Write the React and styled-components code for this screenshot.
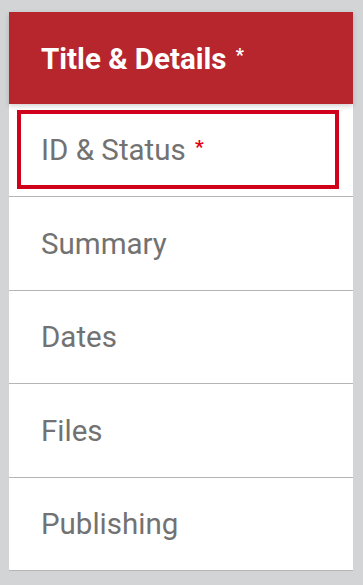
import React from "react";
import styled, { createGlobalStyle } from "styled-components";

const Global = createGlobalStyle`
  html, body { margin: 0; padding: 0; background: #d3d4d6; }
  body { font-family: Roboto, "Liberation Sans", Arial, sans-serif; }
`;

const Page = styled.div`
  padding: 12px 10px 0 9px;
`;

const Panel = styled.nav`
  background: #ffffff;
  display: flex;
  flex-direction: column;
`;

const Header = styled.div`
  height: 91.5px;
  box-sizing: border-box;
  background: #b8262d;
  color: #ffffff;
  display: flex;
  align-items: center;
  padding-left: 32px;
  padding-top: 2px;
  font-size: 29.5px;
  font-weight: 700;
  box-shadow: 0 2px 5px rgba(0, 0, 0, 0.18);
  position: relative;
  z-index: 1;
`;

const Star = styled.span`
  font-size: ${(p) => p.$size || 18}px;
  font-weight: 700;
  color: ${(p) => p.$color};
  position: relative;
  top: -4px;
  margin-left: 2px;
`;

const Row = styled.div`
  height: 93.5px;
  box-sizing: border-box;
  border-bottom: 1px solid #b5b5b5;
  padding: 6px 14px 7px 8px;
  display: flex;
`;

const Label = styled.div`
  flex: 1;
  display: flex;
  align-items: center;
  padding-left: 20px;
  padding-top: 2px;
  border: 4px solid ${(p) => (p.$focused ? "#d0021b" : "transparent")};
  font-size: 29.5px;
  color: #727272;
`;

const items = [
  { label: "ID & Status", required: true, focused: true },
  { label: "Summary" },
  { label: "Dates" },
  { label: "Files" },
  { label: "Publishing" },
];

export default function App() {
  return (
    <>
      <Global />
      <Page>
        <Panel>
          <Header>
            Title &amp; Details&nbsp;<Star $color="#ffffff">*</Star>
          </Header>
          {items.map((it) => (
            <Row key={it.label}>
              <Label $focused={it.focused}>
                {it.label}
                {it.required && (
                  <>
                    &nbsp;<Star $color="#e3000f" $size={19}>*</Star>
                  </>
                )}
              </Label>
            </Row>
          ))}
        </Panel>
      </Page>
    </>
  );
}
